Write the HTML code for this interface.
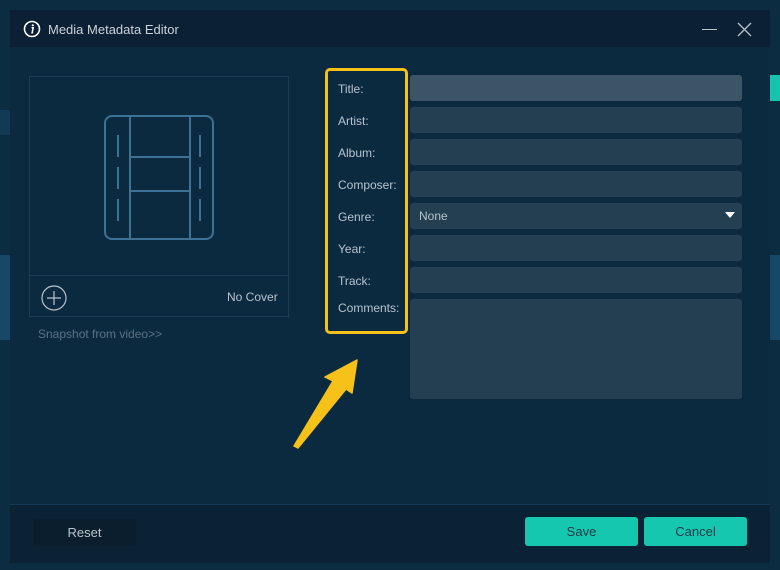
<!DOCTYPE html>
<html><head><style>
*{margin:0;padding:0;box-sizing:border-box}
body{width:780px;height:570px;background:#0d2b40;font-family:"Liberation Sans","DejaVu Sans",sans-serif;position:relative;overflow:hidden;font-size:12px}
.a{position:absolute}
.fld{position:absolute;left:410px;width:332px;height:26px;background:#243f52;border-radius:3px}
.lbl{position:absolute;left:338px;color:#b7c3cc;font-size:12px}
</style></head><body>
<div class="a" style="left:0;top:0;width:780px;height:570px;background:#0c2c42"></div>
<div class="a" style="left:0;top:110px;width:10px;height:25px;background:#123a55"></div>
<div class="a" style="left:0;top:255px;width:10px;height:85px;background:#174766"></div>
<div class="a" style="left:770px;top:75px;width:10px;height:26px;background:#18c3ad"></div>
<div class="a" style="left:770px;top:255px;width:10px;height:85px;background:#174766"></div>
<div class="a" style="left:10px;top:10px;width:760px;height:553px;background:#0b2a40"></div>
<div class="a" style="left:10px;top:10px;width:760px;height:37px;background:#0b2034"></div>
<svg class="a" style="left:23px;top:20px" width="18" height="18" viewBox="0 0 18 18"><circle cx="9" cy="9" r="7.5" fill="none" stroke="#fff" stroke-width="1.6"/><circle cx="9.8" cy="5.3" r="1.1" fill="#fff"/><path d="M8.6 7.8h1.6l-1.1 5h1" fill="none" stroke="#fff" stroke-width="1.5"/></svg>
<div class="a" style="left:48px;top:22px;color:#c9d2d8;font-size:13px">Media Metadata Editor</div>
<div class="a" style="left:702px;top:29px;width:15px;height:1px;background:#b7c3cc"></div>
<svg class="a" style="left:737px;top:22px" width="15" height="15"><path d="M1 1L14 14M14 1L1 14" stroke="#b7c3cc" stroke-width="1.3"/></svg>
<div class="a" style="left:29px;top:76px;width:260px;height:241px;border:1px solid #1d3d55"></div>
<div class="a" style="left:30px;top:275px;width:258px;height:1px;background:#1d3d55"></div>
<svg class="a" style="left:104px;top:115px" width="110" height="126"><g fill="none" stroke="#3d7196" stroke-width="2"><rect x="1" y="1" width="108" height="123" rx="7"/><path d="M26 1v123M86 1v123M26 42h60M26 76h60M14 20v22M14 52v22M14 84v22M96 20v22M96 52v22M96 84v22"/></g></svg>
<svg class="a" style="left:41px;top:285px" width="26" height="26"><circle cx="13" cy="13" r="12" fill="none" stroke="#b7c3cc" stroke-width="1.2"/><path d="M13 6v14M6 13h14" stroke="#b7c3cc" stroke-width="1.2"/></svg>
<div class="a" style="left:227px;top:290px;color:#b7c3cc">No Cover</div>
<div class="a" style="left:38px;top:327px;color:#5a7385">Snapshot from video&gt;&gt;</div>
<div class="a" style="left:325px;top:68px;width:83px;height:266px;border:3px solid #f6c21a;border-radius:5px"></div>
<div class="lbl" style="top:82px">Title:</div>
<div class="lbl" style="top:114px">Artist:</div>
<div class="lbl" style="top:146px">Album:</div>
<div class="lbl" style="top:178px">Composer:</div>
<div class="lbl" style="top:210px">Genre:</div>
<div class="lbl" style="top:242px">Year:</div>
<div class="lbl" style="top:274px">Track:</div>
<div class="lbl" style="top:301px">Comments:</div>
<div class="fld" style="top:75px;background:#3d5466"></div>
<div class="fld" style="top:107px"></div>
<div class="fld" style="top:139px"></div>
<div class="fld" style="top:171px"></div>
<div class="fld" style="top:203px"><span class="a" style="left:9px;top:6px;color:#b7c3cc">None</span><svg class="a" style="left:315px;top:9px" width="10" height="7"><path d="M0 0h10L5 6z" fill="#fff"/></svg></div>
<div class="fld" style="top:235px"></div>
<div class="fld" style="top:267px"></div>
<div class="fld" style="top:299px;height:100px"></div>
<svg class="a" style="left:290px;top:355px" width="75" height="100"><path d="M67 5L62 38L56 34L8 93L4 91L43 26L35 22Z" fill="#f6c21a" stroke="#f6c21a" stroke-width="1.5" stroke-linejoin="round"/></svg>
<div class="a" style="left:10px;top:504px;width:760px;height:1px;background:#143a55"></div>
<div class="a" style="left:10px;top:505px;width:760px;height:58px;background:#0b2134"></div>
<div class="a" style="left:33px;top:519px;width:103px;height:27px;background:#0a1e2e;color:#b7c3cc;text-align:center;line-height:27px;font-size:13px">Reset</div>
<div class="a" style="left:525px;top:517px;width:113px;height:29px;background:#16c7b0;border-radius:3px;color:#1b3b48;text-align:center;line-height:29px;font-size:13px">Save</div>
<div class="a" style="left:644px;top:517px;width:103px;height:29px;background:#16c7b0;border-radius:3px;color:#1b3b48;text-align:center;line-height:29px;font-size:13px">Cancel</div>
</body></html>
